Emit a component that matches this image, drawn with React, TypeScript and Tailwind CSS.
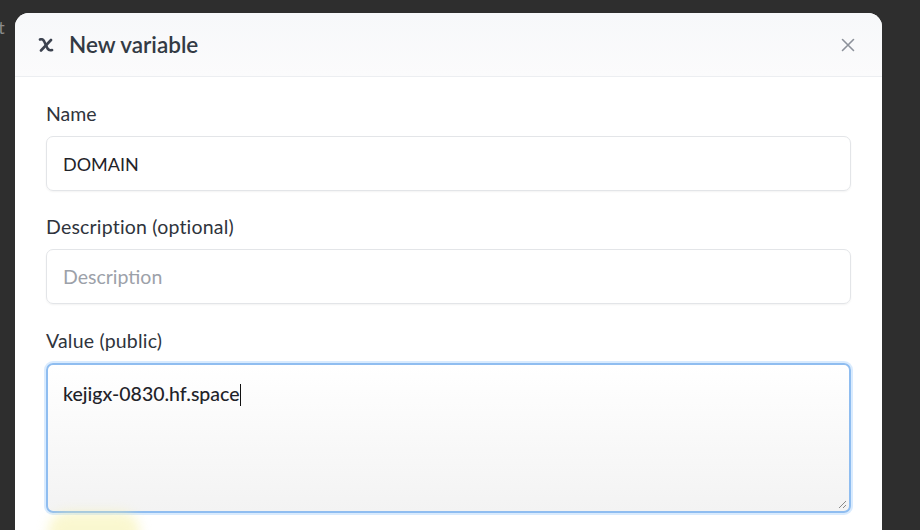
import React from "react";

const App = () => {
  return (
    <div className="relative w-[920px] h-[530px] overflow-hidden bg-[#2e2e2e] font-['Lato',_'Noto_Sans',_sans-serif]">
      <span className="absolute left-[-6px] top-[14px] text-[18px] text-[#8a8a8a]">it</span>
      <div className="absolute left-[15px] top-[13px] w-[867px] h-[540px] bg-white rounded-t-[14px] flex flex-col">
        <div className="h-[64px] flex items-center px-[23px] bg-gradient-to-b from-[#f7f8fa] to-[#fbfbfc] border-b border-[#eceef1] rounded-t-[14px]">
          <svg width="16" height="14" viewBox="0 0 16 14" className="mr-[15px]">
            <path d="M2 1.5 Q4.5 0.5 6 3 L9.5 10.5 Q11 13 14 12" fill="none" stroke="#3d4350" strokeWidth="2.6" strokeLinecap="round" />
            <path d="M13 2 L3 12.5" fill="none" stroke="#3d4350" strokeWidth="2.6" strokeLinecap="round" />
          </svg>
          <span className="text-[22.5px] text-[#333a44] font-semibold">New variable</span>
          <svg width="14" height="14" viewBox="0 0 14 14" className="ml-auto mr-[4px]">
            <path d="M1.5 1.5 L12.5 12.5 M12.5 1.5 L1.5 12.5" stroke="#8c919a" strokeWidth="1.6" strokeLinecap="round" />
          </svg>
        </div>
        <div className="px-[31px] pt-[26px] flex flex-col">
          <label className="text-[19.5px] text-[#2f343c] leading-[22px]">Name</label>
          <input
            className="mt-[11px] h-[55px] w-full rounded-[7px] border border-[#e3e5e8] shadow-[0_1px_2px_rgba(0,0,0,0.05)] px-[16px] text-[18px] text-[#1f2329] outline-none"
            defaultValue="DOMAIN"
          />
          <label className="mt-[25px] text-[19.5px] text-[#2f343c] leading-[22px] tracking-[0.2px]">Description (optional)</label>
          <input
            className="mt-[11px] h-[55px] w-full rounded-[7px] border border-[#e3e5e8] shadow-[0_1px_2px_rgba(0,0,0,0.05)] px-[16px] text-[19.5px] text-[#1f2329] placeholder:text-[#9ca1a9] outline-none"
            placeholder="Description"
          />
          <label className="mt-[26px] text-[19.5px] text-[#2f343c] leading-[22px] tracking-[0.2px]">Value (public)</label>
          <div className="mt-[11px] relative h-[150px] w-full rounded-[7px] border-2 border-[#8fbdf0] shadow-[0_0_0_2px_rgba(147,197,253,0.35)] bg-gradient-to-b from-white to-[#f3f3f3] px-[15px] pt-[14px]">
            <span className="text-[19.5px] text-[#1f2329] font-medium">kejigx-0830.hf.space</span>
            <span className="inline-block w-[1px] h-[22px] bg-[#111] align-[-5px]"></span>
            <svg width="10" height="10" viewBox="0 0 10 10" className="absolute right-[2px] bottom-[2px]">
              <path d="M9 2 L2 9 M9 6 L6 9" stroke="#8a8a8a" strokeWidth="1" />
            </svg>
          </div>
        </div>
      </div>
      <div className="absolute left-[48px] top-[512px] w-[92px] h-[40px] rounded-full bg-[#f5f0a0] opacity-50 blur-[6px]"></div>
    </div>
  );
};

export default App;
